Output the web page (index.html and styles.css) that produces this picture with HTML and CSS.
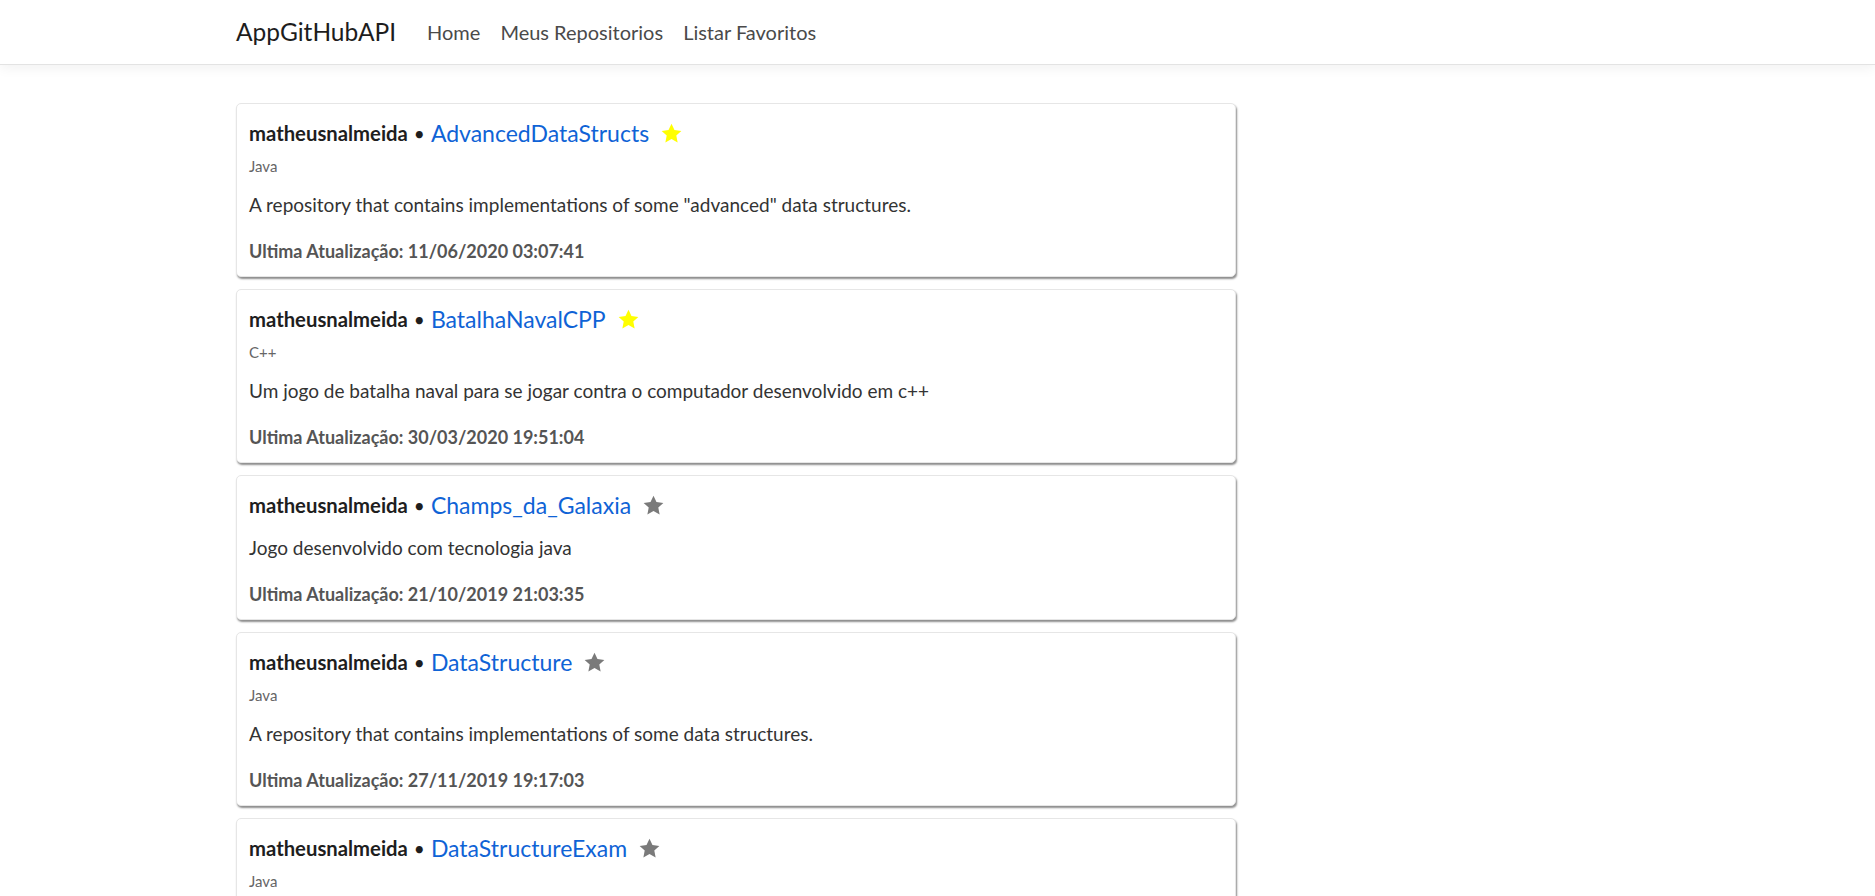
FILE: index.html
```html
<!DOCTYPE html>
<html lang="pt-BR">
<head>
<meta charset="utf-8">
<title>AppGitHubAPI</title>
<link rel="stylesheet" href="styles.css">
</head>
<body>
<header class="navbar">
  <div class="container nav-inner">
    <a class="brand" href="#">AppGitHubAPI</a>
    <nav class="nav-links">
      <a class="nav-link" href="#">Home</a>
      <a class="nav-link" href="#">Meus Repositorios</a>
      <a class="nav-link" href="#">Listar Favoritos</a>
    </nav>
  </div>
</header>
<main class="container main">
  <div class="repo-list">
    <article class="card">
      <div class="title"><span class="owner">matheusnalmeida</span><span class="dot">•</span><a class="repo" href="#">AdvancedDataStructs</a>
        <svg class="star fav" viewBox="0 0 24 24"><path d="M12 1.8l3.1 6.6 7.2.9-5.3 4.9 1.4 7.1L12 17.8l-6.4 3.5 1.4-7.1-5.3-4.9 7.2-.9z"/></svg></div>
      <div class="lang">Java</div>
      <p class="desc">A repository that contains implementations of some "advanced" data structures.</p>
      <div class="updated">Ultima Atualização: 11/06/2020 03:07:41</div>
    </article>
    <article class="card">
      <div class="title"><span class="owner">matheusnalmeida</span><span class="dot">•</span><a class="repo" href="#">BatalhaNavalCPP</a>
        <svg class="star fav" viewBox="0 0 24 24"><path d="M12 1.8l3.1 6.6 7.2.9-5.3 4.9 1.4 7.1L12 17.8l-6.4 3.5 1.4-7.1-5.3-4.9 7.2-.9z"/></svg></div>
      <div class="lang">C++</div>
      <p class="desc">Um jogo de batalha naval para se jogar contra o computador desenvolvido em c++</p>
      <div class="updated">Ultima Atualização: 30/03/2020 19:51:04</div>
    </article>
    <article class="card">
      <div class="title"><span class="owner">matheusnalmeida</span><span class="dot">•</span><a class="repo" href="#">Champs_da_Galaxia</a>
        <svg class="star" viewBox="0 0 24 24"><path d="M12 1.8l3.1 6.6 7.2.9-5.3 4.9 1.4 7.1L12 17.8l-6.4 3.5 1.4-7.1-5.3-4.9 7.2-.9z"/></svg></div>
      <p class="desc">Jogo desenvolvido com tecnologia java</p>
      <div class="updated">Ultima Atualização: 21/10/2019 21:03:35</div>
    </article>
    <article class="card">
      <div class="title"><span class="owner">matheusnalmeida</span><span class="dot">•</span><a class="repo" href="#">DataStructure</a>
        <svg class="star" viewBox="0 0 24 24"><path d="M12 1.8l3.1 6.6 7.2.9-5.3 4.9 1.4 7.1L12 17.8l-6.4 3.5 1.4-7.1-5.3-4.9 7.2-.9z"/></svg></div>
      <div class="lang">Java</div>
      <p class="desc">A repository that contains implementations of some data structures.</p>
      <div class="updated">Ultima Atualização: 27/11/2019 19:17:03</div>
    </article>
    <article class="card">
      <div class="title"><span class="owner">matheusnalmeida</span><span class="dot">•</span><a class="repo" href="#">DataStructureExam</a>
        <svg class="star" viewBox="0 0 24 24"><path d="M12 1.8l3.1 6.6 7.2.9-5.3 4.9 1.4 7.1L12 17.8l-6.4 3.5 1.4-7.1-5.3-4.9 7.2-.9z"/></svg></div>
      <div class="lang">Java</div>
      <p class="desc">Data structure exam exercises.</p>
      <div class="updated">Ultima Atualização: 05/11/2019 10:12:20</div>
    </article>
  </div>
</main>
</body>
</html>
```
FILE: styles.css
```css
* { box-sizing: border-box; }

html, body {
  margin: 0;
  padding: 0;
  background: #fff;
  font-family: "Lato", "Noto Sans", sans-serif;
  color: #212529;
}

.container {
  max-width: 1403px;
  margin: 0 auto;
}

.navbar {
  height: 65px;
  background: #fff;
  border-bottom: 1px solid #e3e3e3;
  box-shadow: 0 3px 12px rgba(0, 0, 0, 0.06);
}

.nav-inner {
  display: flex;
  align-items: center;
  height: 63px;
}

.brand {
  font-size: 24.5px;
  color: #1d1d1d;
  text-decoration: none;
  margin-right: 21px;
  line-height: 30px;
}

.nav-links {
  display: flex;
}

.nav-link {
  font-size: 20px;
  color: #4a4a4a;
  text-decoration: none;
  padding: 0 10px;
  line-height: 28px;
}

.main {
  padding-top: 38px;
}

.repo-list {
  width: 1000px;
  display: flex;
  flex-direction: column;
  gap: 12px;
}

.card {
  background: #fff;
  border: 1px solid #e6e6e6;
  border-radius: 5px;
  box-shadow: 1px 2px 2px rgba(0, 0, 0, 0.45);
  padding: 13px 12px 11px;
}

.title {
  display: flex;
  align-items: center;
  height: 32px;
}

.owner {
  font-size: 20.3px;
  font-weight: 700;
  color: #1e1e1e;
}

.dot {
  font-size: 19px;
  color: #1e1e1e;
  margin: 0 6px;
}

.repo {
  font-size: 23px;
  color: #0f63d6;
  text-decoration: none;
}

.star {
  width: 23px;
  height: 23px;
  margin-left: 11px;
  fill: #7a7a7a;
}

.star.fav {
  fill: #ffff00;
}

.lang {
  font-size: 15px;
  line-height: 18px;
  color: #666;
  margin-top: 8px;
  padding-bottom: 3px;
}

.desc {
  margin: 13px 0 0;
  font-size: 19px;
  line-height: 28px;
  color: #333;
}

.updated {
  margin-top: 18px;
  font-size: 18px;
  line-height: 28px;
  font-weight: 700;
  color: #555;
}
```
